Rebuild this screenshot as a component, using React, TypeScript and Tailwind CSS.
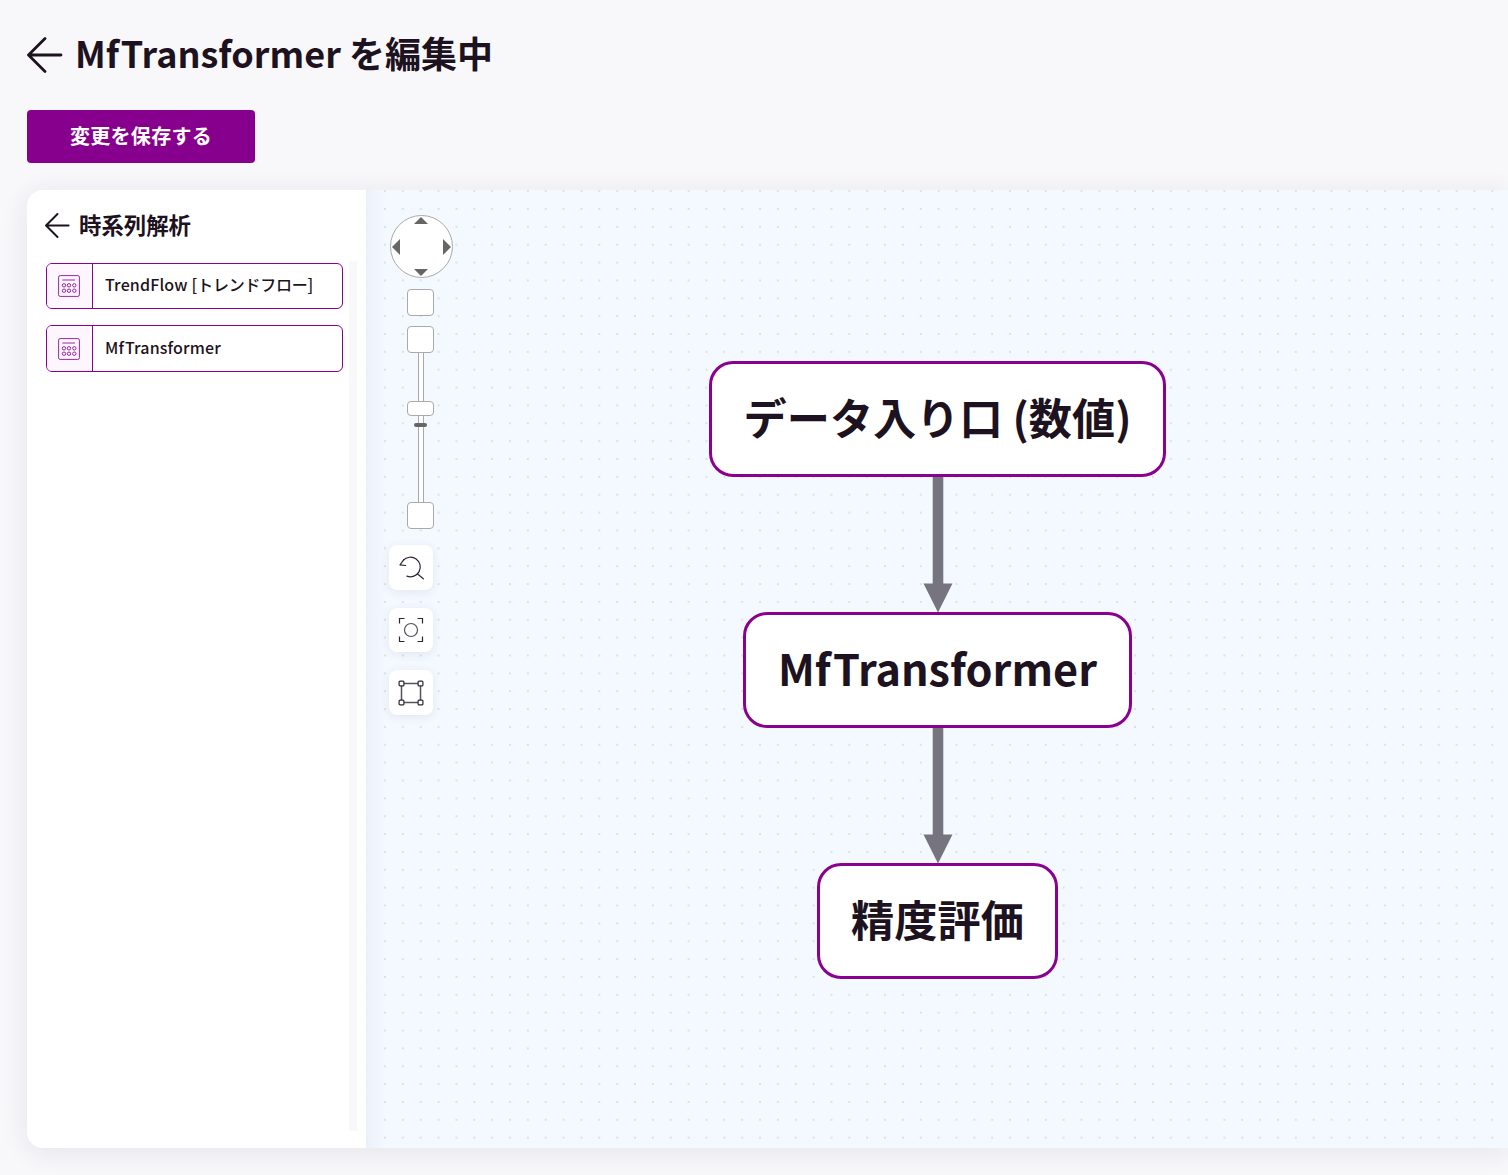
import React from "react";

const font = { fontFamily: '"Noto Sans CJK JP", "Noto Sans", sans-serif' };

function BackArrow({ size, className }: { size: number; className?: string }) {
  return (
    <svg width={size} height={size} viewBox="0 0 36 36" fill="none" stroke="#1d1220" strokeWidth="2.8" strokeLinecap="round" strokeLinejoin="round" className={className}>
      <path d="M34 18H2M18 1.5 1.5 18 18 34.5" />
    </svg>
  );
}

function ModelIcon() {
  return (
    <svg width="22" height="22" viewBox="0 0 22 22" fill="none" stroke="#8a008f" strokeWidth="0.85">
      <rect x="0.6" y="0.6" width="20.8" height="20.8" rx="1.6" />
      <path d="M4.4 5h12.6" />
      {[6, 11, 16.3].map((x) => (
        <React.Fragment key={x}>
          <circle cx={x} cy="10.3" r="1.7" />
          <circle cx={x} cy="15.7" r="1.7" />
        </React.Fragment>
      ))}
    </svg>
  );
}

function Item({ children, h }: { children: React.ReactNode; h: string }) {
  return (
    <div className={`flex w-[297px] ${h} overflow-hidden rounded-[6px] border-[1.5px] border-[#8a008f] bg-white`}>
      <div className="flex w-[46px] shrink-0 items-center justify-center border-r-[1.5px] border-[#8a008f] bg-[#fdf6ff] pr-[1px]">
        <ModelIcon />
      </div>
      <div className="flex items-center pb-[4px] pl-3 text-[16px] font-medium leading-none tracking-[0.15px] text-[#1d1220]">{children}</div>
    </div>
  );
}

function Node({ label, className }: { label: string; className: string }) {
  return (
    <div className={`absolute flex h-[116px] items-center justify-center rounded-[24px] border-[3px] border-[#8a008f] bg-white pb-[4px] text-[43.2px] font-bold leading-none text-[#1d1220] ${className}`}>
      {label}
    </div>
  );
}

function Arrow({ className }: { className: string }) {
  return (
    <svg width="30" height="136" viewBox="0 0 30 136" className={`absolute ${className}`}>
      <rect x="9.7" y="0" width="10.6" height="108" fill="#76747e" />
      <path d="M0.5 106.5H29.5L15 135.5Z" fill="#76747e" />
    </svg>
  );
}

function Box({ className = "h-[27px]" }: { className?: string }) {
  return <div className={`w-[27px] rounded-[4px] border border-[#a9a9a9] bg-white ${className}`} />;
}

function ToolButton({ children, h }: { children: React.ReactNode; h: string }) {
  return (
    <div className={`flex w-[44px] ${h} items-center justify-center rounded-[8px] bg-white shadow-[0_2px_10px_rgba(60,60,120,0.10)]`}>
      {children}
    </div>
  );
}

export default function App() {
  return (
    <div style={font} className="flex h-[1175px] w-[1508px] flex-col overflow-hidden bg-[#f8f8fb] pl-[27px] text-[#1d1220]">
      <div className="flex h-[110px] items-start pt-[37px]">
        <BackArrow size={36} />
        <h1 className="ml-[12px] mt-[-3px] text-[36px] font-bold leading-[36px] tracking-normal">MfTransformer を編集中</h1>
      </div>
      <button className="flex h-[53px] w-[228px] items-center justify-center rounded-[4px] bg-[#87008d] pb-[1px] text-[20px] font-bold tracking-[0.3px] text-white">
        変更を保存する
      </button>
      <div className="mt-[27px] flex h-[958px] w-[1481px] rounded-l-[16px] shadow-[0_4px_28px_rgba(30,30,60,0.09)]">
        <aside className="relative z-10 w-[339px] shrink-0 rounded-l-[16px] bg-white pl-[19px]">
          <div className="ml-[-1px] flex h-[71px] items-start pt-[23px]">
            <BackArrow size={25} />
            <span className="ml-[9px] mt-[-1px] text-[22.4px] font-bold leading-[24px]">時系列解析</span>
          </div>
          <div className="flex gap-[6px]">
            <div className="flex flex-col gap-4 pt-[2px]">
              <Item h="h-[46px]">
                TrendFlow [<span className="tracking-[-0.25px]">トレンドフロー</span>]
              </Item>
              <Item h="h-[47px]">MfTransformer</Item>
            </div>
            <div className="h-[870px] w-2 bg-[#f8f8f9]" />
          </div>
        </aside>
        <main className="relative flex-1 overflow-hidden bg-[#f4f9ff] bg-[radial-gradient(circle,#dfe0e3_1px,transparent_1.3px)] bg-[size:17.865px_17.865px] bg-[position:10.07px_10.07px]">
          <div className="absolute inset-y-0 left-0 w-[20px] bg-gradient-to-r from-[#ecf0fa] to-transparent" />
          <div className="absolute left-[24px] top-[25px] flex flex-col items-start">
            <div className="relative h-[63px] w-[63px] rounded-full border border-[#a9a9a9] bg-white">
              <div className="absolute left-[23px] top-[1px] h-0 w-0 border-x-[7.5px] border-b-[7px] border-x-transparent border-b-[#666]" />
              <div className="absolute bottom-[1px] left-[23px] h-0 w-0 border-x-[7.5px] border-t-[7px] border-x-transparent border-t-[#666]" />
              <div className="absolute left-[1px] top-[23px] h-0 w-0 border-y-[8px] border-r-[8px] border-y-transparent border-r-[#666]" />
              <div className="absolute right-[1px] top-[23px] h-0 w-0 border-y-[8px] border-l-[8px] border-y-transparent border-l-[#666]" />
            </div>
            <div className="ml-[17px] mt-[11px] flex flex-col items-center">
              <Box />
              <div className="h-[10px]" />
              <Box />
              <div className="relative flex h-[149px] w-[27px] justify-center">
                <div className="h-full w-[6px] border-x border-[#a9a9a9] bg-white" />
                <div className="absolute left-0 top-[48px] h-[15px] w-[27px] rounded-[4px] border border-[#a9a9a9] bg-white" />
                <div className="absolute left-[7px] top-[70px] h-[4px] w-[13px] rounded-[2px] bg-[#666]" />
              </div>
              <Box />
            </div>
            <div className="ml-[-1px] mt-[16px] flex flex-col gap-[18px]">
              <ToolButton h="h-[45px]">
                <svg width="26" height="26" viewBox="0 0 26 26" fill="none" stroke="#2b2530" strokeWidth="1.2" strokeLinecap="round" strokeLinejoin="round">
                  <path d="M5.2 5.4A9.8 9.8 0 1 1 8.9 21.1" />
                  <path d="M6 4.5 2 9.8l5.7.7" />
                  <path d="m19.3 18.8 6 5" />
                </svg>
              </ToolButton>
              <ToolButton h="h-[44px]">
                <svg width="26" height="26" viewBox="0 0 26 26" fill="none" stroke="#2b2530" strokeWidth="1.2">
                  <path d="M6.5 1.5h-5v5M19.5 1.5h5v5M1.5 19.5v5h5M24.5 19.5v5h-5" />
                  <circle cx="13" cy="13" r="6.5" stroke="#55505c" />
                </svg>
              </ToolButton>
              <ToolButton h="h-[45px]">
                <svg width="26" height="26" viewBox="0 0 26 26" fill="none" stroke="#2b2530" strokeWidth="1.2">
                  <rect x="3.5" y="3.5" width="19" height="19" stroke="#55505c" strokeWidth="1.5" />
                  {[[3.5, 3.5], [22.5, 3.5], [3.5, 22.5], [22.5, 22.5]].map(([x, y]) => (
                    <rect key={`${x}-${y}`} x={x - 2.4} y={y - 2.4} width="4.8" height="4.8" rx="1" fill="#fff" />
                  ))}
                </svg>
              </ToolButton>
            </div>
          </div>
          <Node label="データ入り口 (数値)" className="left-[343px] top-[171px] w-[457px]" />
          <Arrow className="left-[557px] top-[287px]" />
          <Node label="MfTransformer" className="left-[377px] top-[422px] w-[389px]" />
          <Arrow className="left-[557px] top-[538px]" />
          <Node label="精度評価" className="left-[451px] top-[673px] w-[241px]" />
        </main>
      </div>
    </div>
  );
}
